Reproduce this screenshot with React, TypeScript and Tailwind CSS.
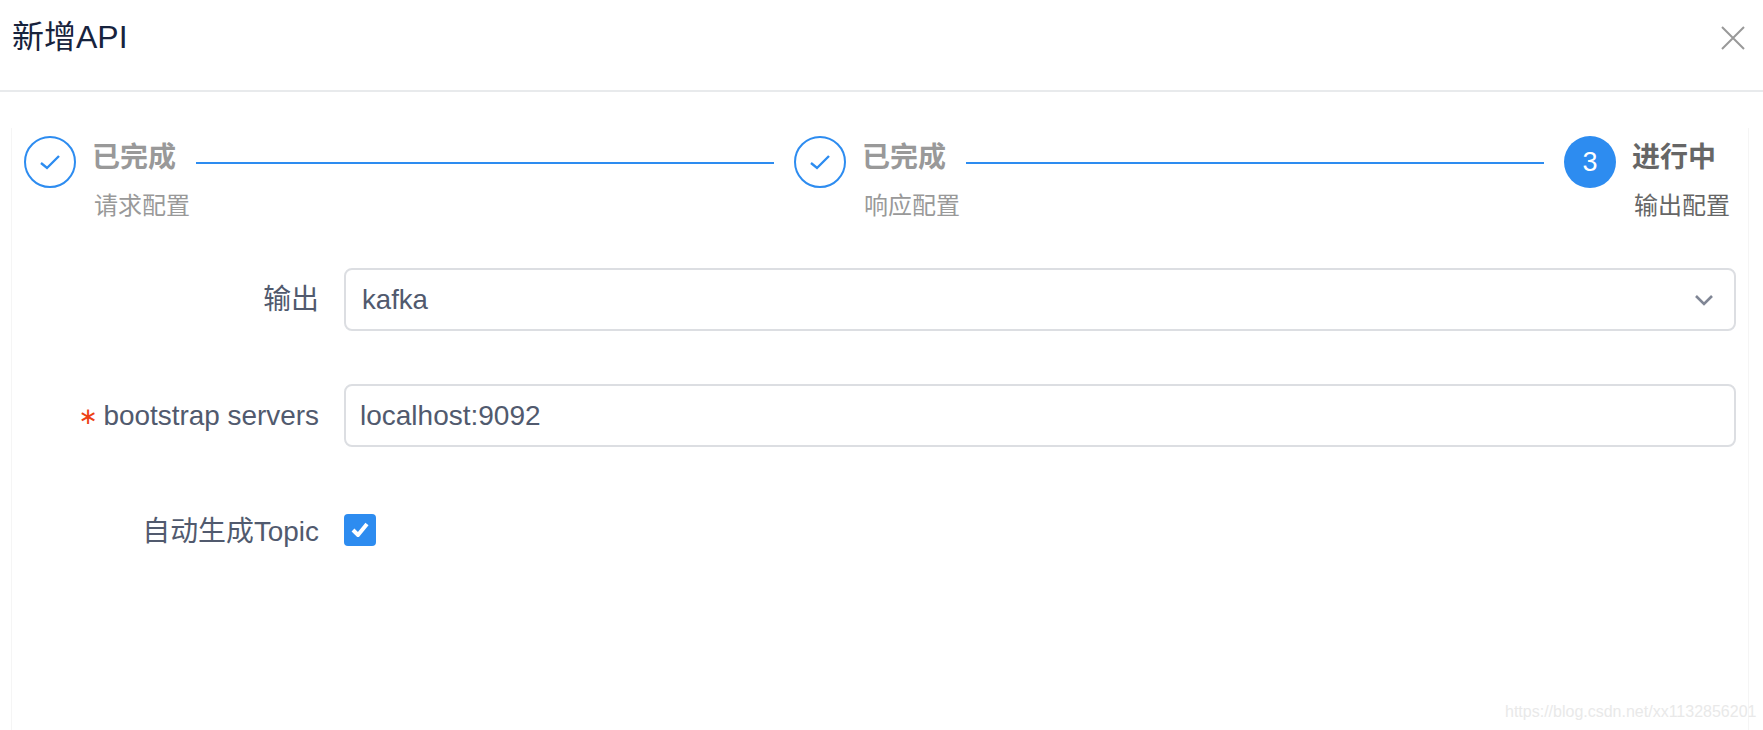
const font = { fontFamily: '"Liberation Sans", "Noto Sans CJK SC", sans-serif' };

function Step({
  state,
  num,
  title,
  sub,
}: {
  state: "done" | "active";
  num?: number;
  title: string;
  sub: string;
}) {
  const done = state === "done";
  return (
    <div className="flex shrink-0 gap-[16px]">
      {done ? (
        <div className="flex h-[52px] w-[52px] items-center justify-center rounded-full border-2 border-[#2d8cf0] bg-white">
          <svg width="22" height="16" viewBox="0 0 22 16" fill="none" stroke="#2d8cf0" strokeWidth="2.4">
            <path d="M2 9l6 5L20 2" />
          </svg>
        </div>
      ) : (
        <div className="flex h-[52px] w-[52px] items-center justify-center rounded-full bg-[#2d8cf0] text-[27px] leading-none text-white">
          {num}
        </div>
      )}
      <div className="w-[84px]">
        <div className={`h-[44px] text-[28px] leading-[44px] font-bold ${done ? "text-[#999999]" : "text-[#666666]"}`}>
          {title}
        </div>
        <div className={`mt-[9px] pl-[2px] text-[24px] leading-[34px] whitespace-nowrap ${done ? "text-[#999999]" : "text-[#666666]"}`}>
          {sub}
        </div>
      </div>
    </div>
  );
}

function Line() {
  return <div className="mx-[20px] mt-[26px] h-[2px] flex-1 bg-[#2d8cf0]" />;
}

function Row({ label, required, children }: { label: string; required?: boolean; children: React.ReactNode }) {
  return (
    <div className="flex h-[63px] items-center">
      <label className="w-[295px] text-right text-[27.9px] leading-none whitespace-nowrap text-[#515a6e]">
        {required && <span className="mr-[6px] align-[1px] font-['DejaVu_Sans'] text-[23px] text-[#ed4014]">∗</span>}
        {label}
      </label>
      <div className="ml-[25px] flex-1">{children}</div>
    </div>
  );
}

export default function App() {
  return (
    <div className="relative h-[730px] w-[1763px] overflow-hidden bg-white" style={font}>
      <div className="flex h-[92px] items-start justify-between border-b-2 border-[#e8eaec] pt-[17px] pr-[18px] pl-[12px]">
        <h2 className="text-[32px] leading-[40px] font-normal text-[#17233d]">新增API</h2>
        <svg className="mt-[9px]" width="24" height="24" viewBox="0 0 24 24" fill="none" stroke="#999999" strokeWidth="2">
          <path d="M1 1l22 22M23 1L1 23" />
        </svg>
      </div>

      <div className="mt-[36px] mr-[14px] ml-[11px] h-[602px] border-x border-[#f5f5f5] pt-[8px] pr-[12px] pl-[12px]">
        <div className="flex pr-[20px]">
          <Step state="done" title="已完成" sub="请求配置" />
          <Line />
          <Step state="done" title="已完成" sub="响应配置" />
          <Line />
          <Step state="active" num={3} title="进行中" sub="输出配置" />
        </div>

        <div className="mt-[45px] flex flex-col gap-[53px]">
          <Row label="输出">
            <div className="flex h-[63px] items-center justify-between rounded-[8px] border-2 border-[#dcdee2] pr-[20px] pl-[16px] text-[27.6px] text-[#515a6e]">
              <span>kafka</span>
              <svg width="20" height="12" viewBox="0 0 20 12" fill="none" stroke="#808695" strokeWidth="2.6">
                <path d="M2 2l8 8 8-8" />
              </svg>
            </div>
          </Row>
          <Row label="bootstrap servers" required>
            <div className="flex h-[63px] items-center rounded-[8px] border-2 border-[#dcdee2] pl-[14px] text-[28px] text-[#515a6e]">
              localhost:9092
            </div>
          </Row>
          <Row label="自动生成Topic">
            <div className="mb-[3px] flex h-[32px] w-[32px] items-center justify-center rounded-[4px] bg-[#2d8cf0]">
              <svg className="mb-[2px]" width="18" height="15" viewBox="0 0 18 15" fill="none" stroke="white" strokeWidth="4">
                <path d="M2 8l5 5 9-11" />
              </svg>
            </div>
          </Row>
        </div>
      </div>

      <span className="absolute top-[700px] left-[1505px] text-[16px] leading-[24px] whitespace-nowrap text-[#e9e9e9]">
        https://blog.csdn.net/xx1132856201
      </span>
    </div>
  );
}
